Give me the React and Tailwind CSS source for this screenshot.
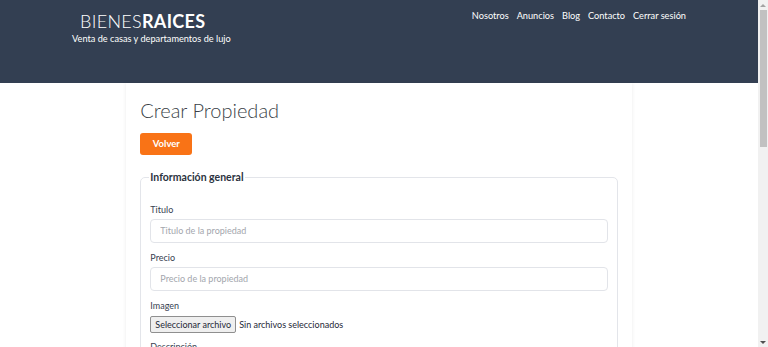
import React from 'react';

const font = { fontFamily: 'Lato, "Open Sans", sans-serif' };

// --- CAMPO DE TEXTO ---
const Campo = ({ label, placeholder, className = '' }) => (
    <div className={className}>
        <label className="block text-[9px] text-[#374151] leading-[12px] mb-[3px]">{label}</label>
        <input
            type="text"
            placeholder={placeholder}
            className="block w-full h-[24px] border border-[#e2e4e9] rounded-[4px] px-[9px] text-[9px] placeholder:text-[#a3a6ad] outline-none"
        />
    </div>
);

const Scrollbar = () => (
    <div className="w-[10px] h-screen bg-[#f1f1f1] flex flex-col items-center shrink-0">
        <div className="h-[10px] flex items-center justify-center">
            <div className="w-0 h-0 border-l-[3px] border-r-[3px] border-b-[3px] border-l-transparent border-r-transparent border-b-[#a3a3a3]" />
        </div>
        <div className="w-[7px] h-[137px] bg-[#c1c1c1]" />
        <div className="flex-1" />
        <div className="h-[10px] flex items-center justify-center">
            <div className="w-0 h-0 border-l-[3px] border-r-[3px] border-t-[3px] border-l-transparent border-r-transparent border-t-[#505050]" />
        </div>
    </div>
);

export default function App() {
    return (
        <div className="flex h-screen overflow-hidden bg-white" style={font}>
            <div className="flex-1 flex flex-col overflow-hidden">

                {/* CABECERA */}
                <header className="bg-[#333f52] h-[83px] shrink-0">
                    <div className="flex justify-between pl-[72px] pr-[72px]">
                        <div className="pt-[11px]">
                            <h1 className="ml-[8px] text-[18px] leading-[20px] text-white tracking-[0.3px]">
                                <span className="font-light">BIENES</span><span className="font-bold">RAICES</span>
                            </h1>
                            <p className="text-[9.2px] leading-[12px] mt-[2px] text-white">Venta de casas y departamentos de lujo</p>
                        </div>
                        <nav className="flex gap-[8px] pt-[10px] text-[9.2px] text-white h-fit leading-[12px]">
                            <a>Nosotros</a>
                            <a>Anuncios</a>
                            <a>Blog</a>
                            <a>Contacto</a>
                            <a>Cerrar sesión</a>
                        </nav>
                    </div>
                </header>

                {/* CONTENIDO */}
                <main className="flex-1">
                    <div className="w-2/3 mx-auto h-full bg-white shadow-[0_0_4px_rgba(0,0,0,0.08)] px-[14px] pt-[14px]">
                        <h2 className="text-[20px] font-light text-[#3a3f47] leading-[26px]">Crear Propiedad</h2>

                        <button className="mt-[10px] w-[52px] h-[22px] bg-[#f97316] text-white text-[9.5px] font-bold rounded-[3px]">
                            Volver
                        </button>

                        <fieldset className="mt-[15px] border border-[#e3e5ea] rounded-[5px] px-[9px] pb-[20px]">
                            <legend className="text-[10.5px] font-bold text-[#2b3340] px-[1px] -ml-[1px]">Información general</legend>

                            <div className="pt-[18px]">
                                <Campo label="Titulo" placeholder="Titulo de la propiedad" />
                                <Campo className="mt-[9px]" label="Precio" placeholder="Precio de la propiedad" />

                                <div className="mt-[9px]">
                                    <label className="block text-[9px] text-[#374151] leading-[12px] mb-[4px]">Imagen</label>
                                    <div className="flex items-center text-[9px] text-[#1f2937]">
                                        <span className="border border-[#8f8f8f] bg-[#efefef] rounded-[2px] px-[4px] h-[17px] leading-[15px]">Seleccionar archivo</span>
                                        <span className="ml-[3px]">Sin archivos seleccionados</span>
                                    </div>
                                </div>

                                <label className="block mt-[8px] text-[9px] text-[#374151] leading-[12px]">Descripción</label>
                            </div>
                        </fieldset>
                    </div>
                </main>
            </div>
            <Scrollbar />
        </div>
    );
}
